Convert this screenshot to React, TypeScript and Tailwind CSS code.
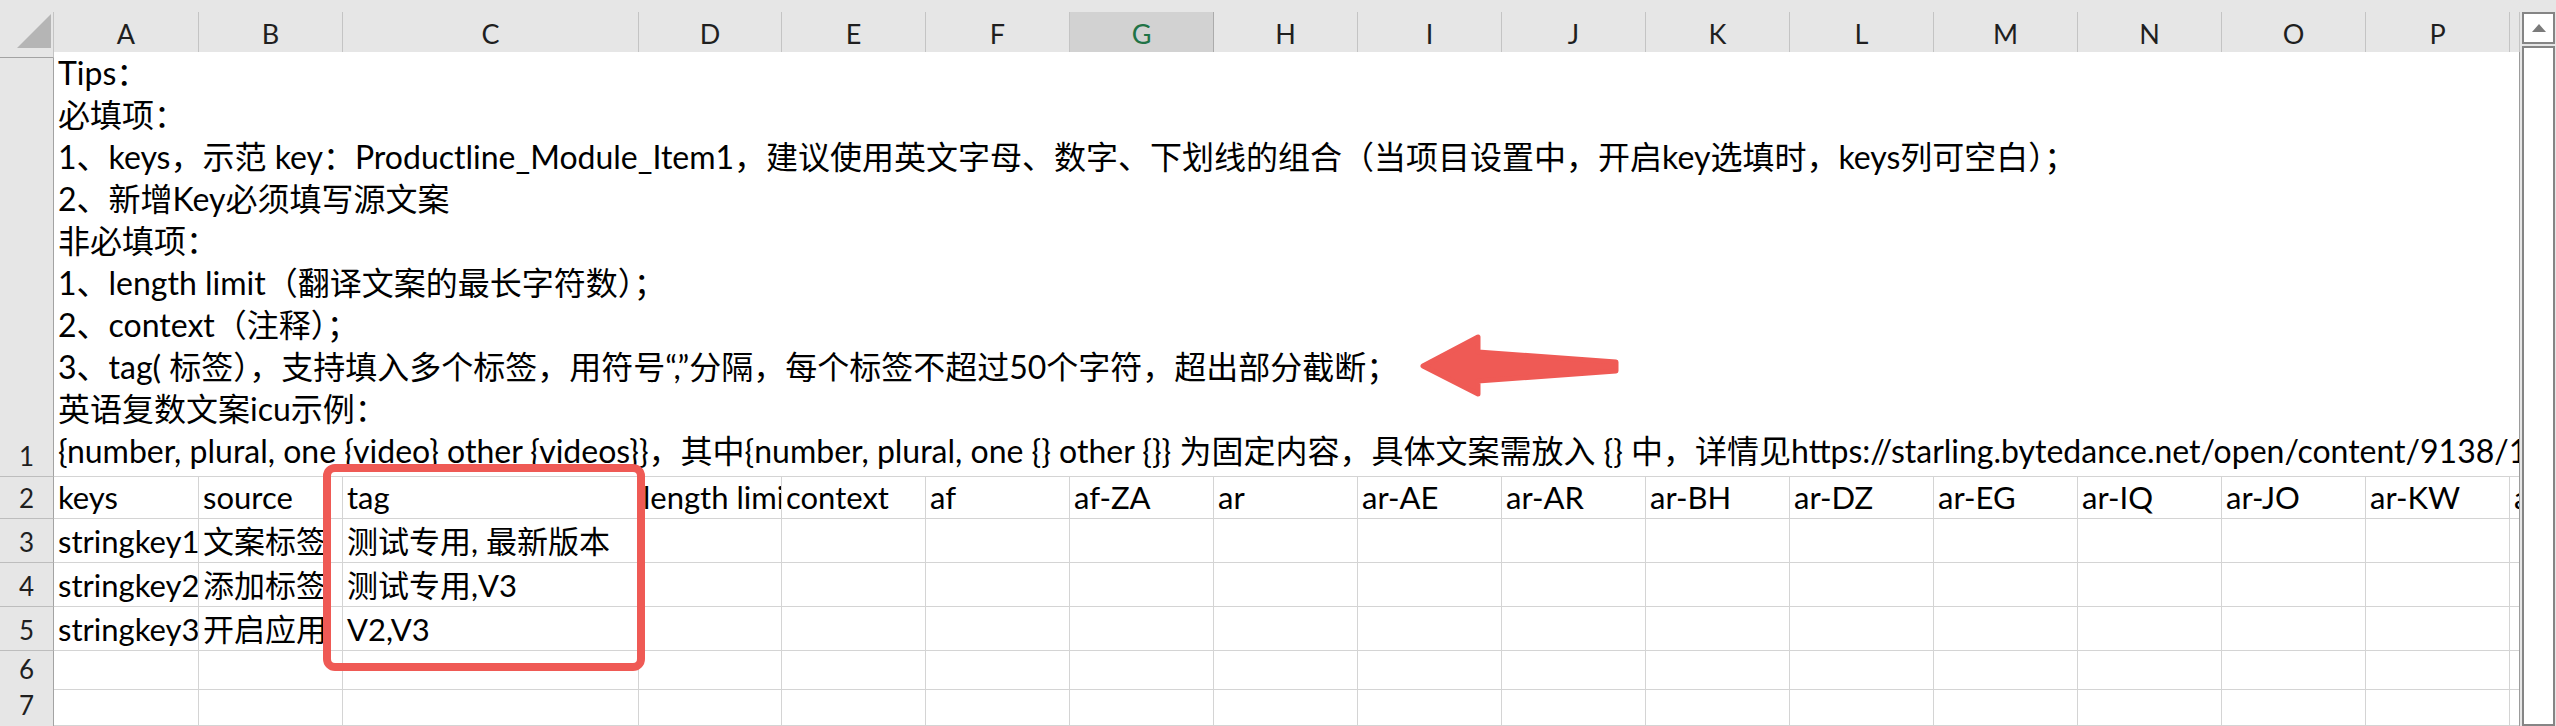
import React from 'react';

// column widths follow the screenshot: row header, A, B, C (wide), D, E..P, partial Q
const GRID = 'grid grid-cols-[54px_145px_144px_296px_143px_repeat(12,144px)_1fr]';
const FONT = "font-[family-name:Lato,'Noto_Sans_CJK_SC',sans-serif]";

const letters = ['A', 'B', 'C', 'D', 'E', 'F', 'G', 'H', 'I', 'J', 'K', 'L', 'M', 'N', 'O', 'P', ''];

const tips = [
    'Tips：',
    '必填项：',
    '1、keys，示范 key：Productline_Module_Item1，建议使用英文字母、数字、下划线的组合（当项目设置中，开启key选填时，keys列可空白）；',
    '2、新增Key必须填写源文案',
    '非必填项：',
    '1、length limit（翻译文案的最长字符数）；',
    '2、context（注释）；',
    '3、tag( 标签），支持填入多个标签，用符号“,”分隔，每个标签不超过50个字符，超出部分截断；',
    '英语复数文案icu示例：',
    '{number, plural, one {video} other {videos}}，其中{number, plural, one {} other {}} 为固定内容，具体文案需放入 {} 中，详情见https://starling.bytedance.net/open/content/9138/111317093',
];

const rows: { n: number; h: string; cells: string[] }[] = [
    {
        n: 2,
        h: 'h-[42px]',
        cells: ['keys', 'source', 'tag', 'length limit', 'context', 'af', 'af-ZA', 'ar', 'ar-AE', 'ar-AR', 'ar-BH', 'ar-DZ', 'ar-EG', 'ar-IQ', 'ar-JO', 'ar-KW', 'ar-LB'],
    },
    { n: 3, h: 'h-[44px]', cells: ['stringkey1', '文案标签', '测试专用, 最新版本'] },
    { n: 4, h: 'h-[44px]', cells: ['stringkey2', '添加标签', '测试专用,V3'] },
    { n: 5, h: 'h-[44px]', cells: ['stringkey3', '开启应用', 'V2,V3'] },
    { n: 6, h: 'h-[36px]', cells: [] },
    { n: 7, h: 'h-[36px]', cells: [] },
    { n: 8, h: 'h-[36px]', cells: [] },
];

const RowHeader: React.FC<{ n: number }> = ({ n }) => (
    <div className="flex items-end justify-center bg-[#e6e6e6] border-r border-r-[#a3a3a3] border-b border-b-[#bdbdbd] pb-[2px] text-[26px] leading-[36px] text-[#1f1f1f]">
        {n}
    </div>
);

const App: React.FC = () => {
    return (
        <div className={`relative flex h-[726px] w-[2556px] overflow-hidden bg-[#e6e6e6] text-black ${FONT}`}>
            <div className="flex w-[2520px] flex-col">
                {/* column headers */}
                <div className={`${GRID} h-[52px] shrink-0 pt-[12px]`}>
                    <div className="relative border-r border-r-[#c4c4c4] border-b border-b-[#a3a3a3]">
                        <svg className="absolute left-[17px] top-[2px]" width="34" height="34" viewBox="0 0 34 34">
                            <polygon points="0,34 34,34 34,0" fill="#b5b5b5" />
                        </svg>
                    </div>
                    {letters.map((l, i) =>
                        l === 'G' ? (
                            <div key={i} className="flex items-center justify-center bg-[#d2d2d2] border-r border-r-[#ababab] border-b-[3px] border-b-[#217346] pt-[2px] text-[27px] text-[#217346]">
                                {l}
                            </div>
                        ) : (
                            <div key={i} className="flex items-center justify-center border-r border-r-[#c4c4c4] border-b border-b-[#a3a3a3] text-[27px] text-[#1f1f1f]">
                                {l}
                            </div>
                        )
                    )}
                </div>

                {/* sheet body */}
                <div className="flex-1 border-r border-r-[#9c9c9c] bg-white">
                    <div className="flex h-[425px]">
                        <div className="w-[54px] shrink-0 flex items-end justify-center bg-[#e6e6e6] border-r border-r-[#a3a3a3] border-b border-b-[#bdbdbd] pb-[2px] text-[26px] leading-[36px] text-[#1f1f1f]">
                            1
                        </div>
                        <div className="min-w-0 flex-1 overflow-hidden border-b border-[#d4d4d4] pl-[4px] text-[32px] leading-[42px]">
                            {tips.map((t, i) => (
                                <div key={i} className="whitespace-nowrap">{t}</div>
                            ))}
                        </div>
                    </div>

                    {rows.map(r => (
                        <div key={r.n} className={`${GRID} ${r.h}`}>
                            <RowHeader n={r.n} />
                            {letters.map((_, i) => (
                                <div
                                    key={i}
                                    className={`flex items-end overflow-hidden whitespace-nowrap border-b border-[#d4d4d4] pl-[4px] pb-[3px] text-[31px] leading-[36px] ${i < 16 ? 'border-r' : ''}`}
                                >
                                    {r.cells[i] ?? ''}
                                </div>
                            ))}
                        </div>
                    ))}
                </div>
            </div>

            {/* vertical scrollbar */}
            <div className="flex w-[36px] flex-col pt-[12px] pl-[2px] pr-[1px]">
                <div className="flex h-[32px] items-center justify-center border-2 border-[#858585] bg-white">
                    <svg width="14" height="8" viewBox="0 0 14 8">
                        <polygon points="0,8 7,0 14,8" fill="#7b7b7b" />
                    </svg>
                </div>
                <div className="mt-[2px] flex-1 border-2 border-[#858585] bg-white" />
            </div>

            {/* annotations drawn over the sheet */}
            <div className="absolute left-[323px] top-[464px] h-[207px] w-[322px] rounded-[12px] border-[8px] border-[#ef5a55]" />
            <svg className="absolute left-[1415px] top-[330px]" width="210" height="72" viewBox="0 0 210 72">
                <polygon
                    points="8,36 63,7 63,22 201,32 201,41 63,51 63,64"
                    fill="#ef5a55"
                    stroke="#ef5a55"
                    strokeWidth="5"
                    strokeLinejoin="round"
                />
            </svg>
        </div>
    );
};

export default App;
